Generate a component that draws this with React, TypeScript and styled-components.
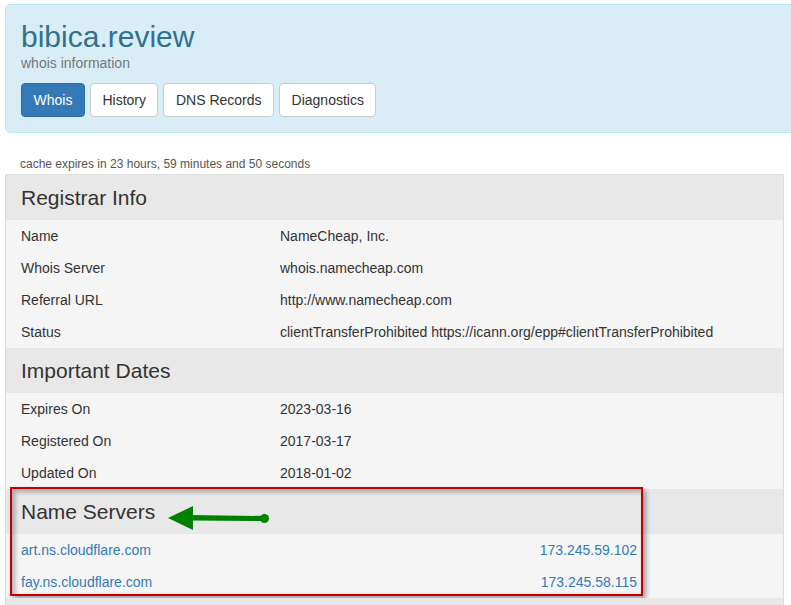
import React from "react";
import styled, { createGlobalStyle } from "styled-components";

const Global = createGlobalStyle`
  html, body { margin: 0; padding: 0; background: #fff; overflow: hidden; }
  body { font-family: "Liberation Sans", Arial, sans-serif; font-size: 14px; color: #333; }
  * { box-sizing: border-box; }
`;

const Page = styled.div`
  padding: 4px 7px 0 5px;
  width: 791px;
`;

const Jumbotron = styled.div`
  background: #d9edf7;
  border: 1px solid #bce8f1;
  border-radius: 5px;
  margin-right: -30px;
  padding: 15px;
`;

const Title = styled.h1`
  margin: 0;
  font-size: 30px;
  line-height: 33px;
  font-weight: 400;
  color: #31708f;
`;

const Subtitle = styled.div`
  font-size: 14px;
  line-height: 20px;
  color: #777;
`;

const Buttons = styled.div`
  display: flex;
  gap: 5px;
  margin-top: 10px;
`;

const Btn = styled.button<{ $active?: boolean }>`
  font-family: inherit;
  font-size: 14px;
  line-height: 20px;
  padding: 6px 11.5px;
  height: 34px;
  border-radius: 4px;
  border: 1px solid ${(p) => (p.$active ? "#2e6da4" : "#ccc")};
  background: ${(p) => (p.$active ? "#337ab7" : "#fff")};
  color: ${(p) => (p.$active ? "#fff" : "#333")};
  cursor: pointer;
`;

const Cache = styled.div`
  font-size: 12px;
  line-height: 17px;
  color: #555;
  padding-left: 15px;
  margin-top: 23px;
  margin-bottom: 1px;
`;

const Panel = styled.div`
  border: 1px solid #ddd;
  border-bottom: none;
  background: #f5f5f5;
`;

const Section = styled.div`
  position: relative;
`;

const SectionHeader = styled.div`
  position: relative;
  height: 45px;
  line-height: 45px;
  padding: 0 15px;
  background: #e7e8e7;
  font-size: 21px;
  color: #333;
`;

const Row = styled.div<{ $ns?: boolean }>`
  display: grid;
  grid-template-columns: ${(p) => (p.$ns ? "1fr auto" : "259px 1fr")};
  height: 32px;
  line-height: 32px;
  padding: ${(p) => (p.$ns ? "0 146px 0 15px" : "0 15px")};
  font-size: 14px;
  color: #333;
  white-space: nowrap;
`;

const Link = styled.a`
  color: #337ab7;
  text-decoration: none;
`;

const Highlight = styled.div`
  position: absolute;
  left: 4px;
  top: -2px;
  width: 633px;
  height: 109px;
  border: 2px solid #c00000;
  box-shadow: 3px 3px 5px rgba(0, 0, 0, 0.35), inset 3px 3px 5px rgba(0, 0, 0, 0.28);
  pointer-events: none;
`;

const Arrow = styled.svg`
  position: absolute;
  left: 154px;
  top: 14px;
`;

const info: [string, string][] = [
  ["Name", "NameCheap, Inc."],
  ["Whois Server", "whois.namecheap.com"],
  ["Referral URL", "http://www.namecheap.com"],
  ["Status", "clientTransferProhibited https://icann.org/epp#clientTransferProhibited"],
];

const dates: [string, string][] = [
  ["Expires On", "2023-03-16"],
  ["Registered On", "2017-03-17"],
  ["Updated On", "2018-01-02"],
];

const ns: [string, string][] = [
  ["art.ns.cloudflare.com", "173.245.59.102"],
  ["fay.ns.cloudflare.com", "173.245.58.115"],
];

export default function App() {
  return (
    <>
      <Global />
      <Page>
        <Jumbotron>
          <Title>bibica.review</Title>
          <Subtitle>whois information</Subtitle>
          <Buttons>
            <Btn $active>Whois</Btn>
            <Btn>History</Btn>
            <Btn>DNS Records</Btn>
            <Btn>Diagnostics</Btn>
          </Buttons>
        </Jumbotron>
        <Cache>cache expires in 23 hours, 59 minutes and 50 seconds</Cache>
        <Panel>
          <Section>
            <SectionHeader>Registrar Info</SectionHeader>
            {info.map(([k, v]) => (
              <Row key={k}>
                <span>{k}</span>
                <span>{v}</span>
              </Row>
            ))}
          </Section>
          <Section>
            <SectionHeader>Important Dates</SectionHeader>
            {dates.map(([k, v]) => (
              <Row key={k}>
                <span>{k}</span>
                <span>{v}</span>
              </Row>
            ))}
          </Section>
          <Section>
            <SectionHeader>
              Name Servers
              <Arrow width="112" height="30" viewBox="0 0 112 30">
                <polygon points="8,15 33,3 33,27" fill="#008000" />
                <path d="M30 12 L104 13 L104 18 L30 17.5 Z" fill="#008000" />
                <circle cx="104.5" cy="15.5" r="4.5" fill="#008000" />
              </Arrow>
            </SectionHeader>
            {ns.map(([k, v]) => (
              <Row $ns key={k}>
                <Link href="#">{k}</Link>
                <Link href="#">{v}</Link>
              </Row>
            ))}
            <Highlight />
          </Section>
          <Section>
            <SectionHeader />
          </Section>
        </Panel>
      </Page>
    </>
  );
}
